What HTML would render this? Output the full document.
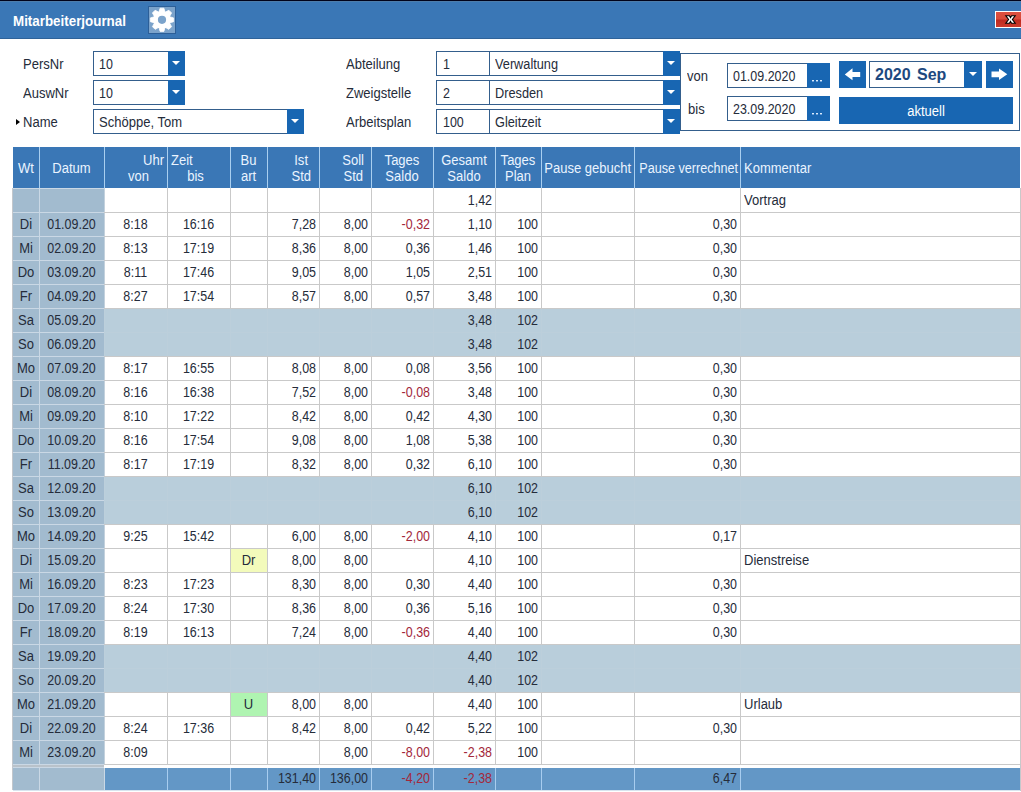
<!DOCTYPE html><html><head><meta charset="utf-8"><style>
*{margin:0;padding:0;box-sizing:border-box}
html,body{width:1021px;height:792px;overflow:hidden;background:#fff;font-family:"Liberation Sans",sans-serif;position:relative}
.a{position:absolute}
.t{position:absolute;white-space:nowrap;font-size:13px;line-height:16px;color:#252c3a}
.box{position:absolute;border:1px solid #345e8c;background:#fff}
.btn{position:absolute;background:#1866b2}
.tri{position:absolute;width:0;height:0;border-left:4px solid transparent;border-right:4px solid transparent;border-top:4px solid #fff}
</style></head><body>
<div class="a" style="left:0px;top:0px;width:1021px;height:1px;background:#01031a;"></div>
<div class="a" style="left:0px;top:1px;width:1021px;height:38px;background:#3a77b6;"></div>
<div class="a" style="left:0px;top:38px;width:1021px;height:1px;background:#2f6399;"></div>
<div class="a" style="left:0px;top:1px;width:1021px;height:1px;background:#4d7dab;"></div>
<div class="t" style="left:13px;top:12.8px;font-size:14px;font-weight:bold;color:#fff;transform:scaleX(0.955);transform-origin:0 0">Mitarbeiterjournal</div>
<div class="a" style="left:148px;top:6px;width:28px;height:28px;background:#7ba3cb;border:1px solid #2c5f98"></div>
<svg class="a" style="left:148px;top:6px" width="28" height="28" viewBox="0 0 28 28">
<g fill="#fff" transform="translate(14 13.8)">
<circle r="8.8"/><polygon points="-3.2,-7 3.2,-7 1.9,-11.6 -1.9,-11.6" stroke="#fff" stroke-width="0.8" stroke-linejoin="round" transform="rotate(0)"/><polygon points="-3.2,-7 3.2,-7 1.9,-11.6 -1.9,-11.6" stroke="#fff" stroke-width="0.8" stroke-linejoin="round" transform="rotate(45)"/><polygon points="-3.2,-7 3.2,-7 1.9,-11.6 -1.9,-11.6" stroke="#fff" stroke-width="0.8" stroke-linejoin="round" transform="rotate(90)"/><polygon points="-3.2,-7 3.2,-7 1.9,-11.6 -1.9,-11.6" stroke="#fff" stroke-width="0.8" stroke-linejoin="round" transform="rotate(135)"/><polygon points="-3.2,-7 3.2,-7 1.9,-11.6 -1.9,-11.6" stroke="#fff" stroke-width="0.8" stroke-linejoin="round" transform="rotate(180)"/><polygon points="-3.2,-7 3.2,-7 1.9,-11.6 -1.9,-11.6" stroke="#fff" stroke-width="0.8" stroke-linejoin="round" transform="rotate(225)"/><polygon points="-3.2,-7 3.2,-7 1.9,-11.6 -1.9,-11.6" stroke="#fff" stroke-width="0.8" stroke-linejoin="round" transform="rotate(270)"/><polygon points="-3.2,-7 3.2,-7 1.9,-11.6 -1.9,-11.6" stroke="#fff" stroke-width="0.8" stroke-linejoin="round" transform="rotate(315)"/>
</g><circle cx="14" cy="13.8" r="4.1" fill="#7ba3cb"/></svg>
<div class="a" style="left:995px;top:11px;width:30px;height:17px;background:linear-gradient(#dd5040 0%,#d84a3a 45%,#bf2a20 55%,#cc3a2c 100%);border:1px solid #fff"></div>
<svg class="a" style="left:1004px;top:13.5px" width="13" height="11" viewBox="0 0 13 11">
<polygon points="1.8,1.8 5.4,1.8 6.5,3.6 7.6,1.8 11.2,1.8 8.4,5.5 11.2,9.2 7.6,9.2 6.5,7.4 5.4,9.2 1.8,9.2 4.6,5.5" fill="#fff" stroke="#000" stroke-width="1.1" stroke-linejoin="miter"/>
</svg>
<div class="t" style="left:23px;top:56px;font-size:14px;transform:scaleX(0.93);transform-origin:0 0">PersNr</div>
<div class="t" style="left:23px;top:85px;font-size:14px;transform:scaleX(0.93);transform-origin:0 0">AuswNr</div>
<div class="t" style="left:23px;top:114px;font-size:14px;transform:scaleX(0.93);transform-origin:0 0">Name</div>
<div class="a" style="left:16px;top:119px;width:0;height:0;border-top:3px solid transparent;border-bottom:3px solid transparent;border-left:4px solid #000"></div>
<div class="box" style="left:93px;top:51px;width:92px;height:25px"></div>
<div class="a" style="left:168px;top:51px;width:17px;height:25px;background:#1866b2;"></div>
<div class="tri" style="left:172px;top:61px"></div>
<div class="t" style="left:99px;top:56px;font-size:14px;transform:scaleX(0.89);transform-origin:0 0">10</div>
<div class="box" style="left:93px;top:80px;width:92px;height:25px"></div>
<div class="a" style="left:168px;top:80px;width:17px;height:25px;background:#1866b2;"></div>
<div class="tri" style="left:172px;top:90px"></div>
<div class="t" style="left:99px;top:85px;font-size:14px;transform:scaleX(0.89);transform-origin:0 0">10</div>
<div class="box" style="left:93px;top:109px;width:211px;height:25px"></div>
<div class="a" style="left:287px;top:109px;width:17px;height:25px;background:#1866b2;"></div>
<div class="tri" style="left:291px;top:119px"></div>
<div class="t" style="left:99px;top:114px;font-size:14px;transform:scaleX(0.93);transform-origin:0 0">Sch&ouml;ppe, Tom</div>
<div class="t" style="left:346px;top:56px;font-size:14px;transform:scaleX(0.93);transform-origin:0 0">Abteilung</div>
<div class="t" style="left:346px;top:85px;font-size:14px;transform:scaleX(0.93);transform-origin:0 0">Zweigstelle</div>
<div class="t" style="left:346px;top:114px;font-size:14px;transform:scaleX(0.93);transform-origin:0 0">Arbeitsplan</div>
<div class="box" style="left:436px;top:51px;width:244px;height:25px"></div>
<div class="a" style="left:489px;top:51px;width:1px;height:25px;background:#345e8c;"></div>
<div class="a" style="left:663px;top:51px;width:17px;height:25px;background:#1866b2;"></div>
<div class="tri" style="left:667px;top:61px"></div>
<div class="t" style="left:443px;top:56px;font-size:14px;transform:scaleX(0.89);transform-origin:0 0">1</div>
<div class="t" style="left:495px;top:56px;font-size:14px;transform:scaleX(0.91);transform-origin:0 0">Verwaltung</div>
<div class="box" style="left:436px;top:80px;width:244px;height:25px"></div>
<div class="a" style="left:489px;top:80px;width:1px;height:25px;background:#345e8c;"></div>
<div class="a" style="left:663px;top:80px;width:17px;height:25px;background:#1866b2;"></div>
<div class="tri" style="left:667px;top:90px"></div>
<div class="t" style="left:443px;top:85px;font-size:14px;transform:scaleX(0.89);transform-origin:0 0">2</div>
<div class="t" style="left:495px;top:85px;font-size:14px;transform:scaleX(0.91);transform-origin:0 0">Dresden</div>
<div class="box" style="left:436px;top:109px;width:244px;height:25px"></div>
<div class="a" style="left:489px;top:109px;width:1px;height:25px;background:#345e8c;"></div>
<div class="a" style="left:663px;top:109px;width:17px;height:25px;background:#1866b2;"></div>
<div class="tri" style="left:667px;top:119px"></div>
<div class="t" style="left:443px;top:114px;font-size:14px;transform:scaleX(0.89);transform-origin:0 0">100</div>
<div class="t" style="left:495px;top:114px;font-size:14px;transform:scaleX(0.91);transform-origin:0 0">Gleitzeit</div>
<div class="a" style="left:680px;top:53px;width:340px;height:78px;border:1px solid #345e8c"></div>
<div class="a" style="left:663px;top:51px;width:17px;height:25px;background:#1866b2;"></div>
<div class="tri" style="left:667px;top:61px"></div>
<div class="a" style="left:663px;top:80px;width:17px;height:25px;background:#1866b2;"></div>
<div class="tri" style="left:667px;top:90px"></div>
<div class="a" style="left:663px;top:109px;width:17px;height:25px;background:#1866b2;"></div>
<div class="tri" style="left:667px;top:119px"></div>
<div class="t" style="left:687px;top:68px;font-size:14px;transform:scaleX(0.93);transform-origin:0 0">von</div>
<div class="t" style="left:688px;top:101px;font-size:14px;transform:scaleX(0.93);transform-origin:0 0">bis</div>
<div class="box" style="left:727px;top:63px;width:103px;height:25px"></div>
<div class="a" style="left:807px;top:63px;width:23px;height:25px;background:#1866b2;"></div>
<div class="a" style="left:812px;top:80px;width:2px;height:1px;background:#d9ebfc;"></div>
<div class="a" style="left:812px;top:81px;width:2px;height:1px;background:#6c9fd6;"></div>
<div class="a" style="left:816px;top:80px;width:2px;height:1px;background:#d9ebfc;"></div>
<div class="a" style="left:816px;top:81px;width:2px;height:1px;background:#6c9fd6;"></div>
<div class="a" style="left:820px;top:80px;width:2px;height:1px;background:#d9ebfc;"></div>
<div class="a" style="left:820px;top:81px;width:2px;height:1px;background:#6c9fd6;"></div>
<div class="t" style="left:733px;top:68px;font-size:14px;transform:scaleX(0.89);transform-origin:0 0">01.09.2020</div>
<div class="box" style="left:727px;top:96px;width:103px;height:25px"></div>
<div class="a" style="left:807px;top:96px;width:23px;height:25px;background:#1866b2;"></div>
<div class="a" style="left:812px;top:113px;width:2px;height:1px;background:#d9ebfc;"></div>
<div class="a" style="left:812px;top:114px;width:2px;height:1px;background:#6c9fd6;"></div>
<div class="a" style="left:816px;top:113px;width:2px;height:1px;background:#d9ebfc;"></div>
<div class="a" style="left:816px;top:114px;width:2px;height:1px;background:#6c9fd6;"></div>
<div class="a" style="left:820px;top:113px;width:2px;height:1px;background:#d9ebfc;"></div>
<div class="a" style="left:820px;top:114px;width:2px;height:1px;background:#6c9fd6;"></div>
<div class="t" style="left:733px;top:101px;font-size:14px;transform:scaleX(0.89);transform-origin:0 0">23.09.2020</div>
<div class="a" style="left:839px;top:61px;width:27px;height:27px;background:#1866b2;"></div>
<div class="a" style="left:986px;top:61px;width:27px;height:27px;background:#1866b2;"></div>
<svg class="a" style="left:843px;top:66px" width="18" height="16" viewBox="0 0 18 16">
<path d="M1.8 8.5 L9.5 2.3 L9.5 6 L17.2 6 L17.2 11.1 L9.5 11.1 L9.5 14.3 Z" fill="#fff"/></svg>
<svg class="a" style="left:990px;top:66px" width="18" height="16" viewBox="0 0 18 16">
<path d="M17.3 8.2 L9 2.4 L9 5.5 L1.5 5.5 L1.5 11.2 L9 11.2 L9 14 Z" fill="#fff"/></svg>
<div class="box" style="left:869px;top:61px;width:113px;height:27px"></div>
<div class="a" style="left:964px;top:61px;width:18px;height:27px;background:#1866b2;"></div>
<div class="tri" style="left:969px;top:72px"></div>
<div class="t" style="left:875px;top:66px;font-size:16px;line-height:18px;font-weight:bold;color:#1d4980;word-spacing:2px">2020 Sep</div>
<div class="a" style="left:839px;top:97px;width:174px;height:27px;background:#1866b2;"></div>
<div class="t" style="left:839px;top:103px;width:174px;text-align:center;font-size:14px;color:#fff;transform:scaleX(0.93);transform-origin:50% 0">aktuell</div>
<div class="a" style="left:13px;top:147px;width:1007px;height:41px;background:#3a77b6;"></div>
<div class="a" style="left:39px;top:147px;width:1px;height:41px;background:#a9cff0;"></div>
<div class="a" style="left:104px;top:147px;width:1px;height:41px;background:#a9cff0;"></div>
<div class="a" style="left:167px;top:147px;width:1px;height:41px;background:#a9cff0;"></div>
<div class="a" style="left:230px;top:147px;width:1px;height:41px;background:#a9cff0;"></div>
<div class="a" style="left:267px;top:147px;width:1px;height:41px;background:#a9cff0;"></div>
<div class="a" style="left:319px;top:147px;width:1px;height:41px;background:#a9cff0;"></div>
<div class="a" style="left:371px;top:147px;width:1px;height:41px;background:#a9cff0;"></div>
<div class="a" style="left:433px;top:147px;width:1px;height:41px;background:#a9cff0;"></div>
<div class="a" style="left:495px;top:147px;width:1px;height:41px;background:#a9cff0;"></div>
<div class="a" style="left:541px;top:147px;width:1px;height:41px;background:#a9cff0;"></div>
<div class="a" style="left:634px;top:147px;width:1px;height:41px;background:#a9cff0;"></div>
<div class="a" style="left:740px;top:147px;width:1px;height:41px;background:#a9cff0;"></div>
<div class="t" style="left:13px;top:160px;width:26px;text-align:center;font-size:14px;color:#eaf4ff;transform:scaleX(0.93);transform-origin:50% 0">Wt</div>
<div class="t" style="left:39px;top:160px;width:65px;text-align:center;font-size:14px;color:#eaf4ff;transform:scaleX(0.93);transform-origin:50% 0">Datum</div>
<div class="t" style="left:104px;top:152px;width:60px;text-align:right;font-size:14px;color:#eaf4ff;transform:scaleX(0.93);transform-origin:100% 0">Uhr</div>
<div class="t" style="left:107px;top:168px;width:63px;text-align:center;font-size:14px;color:#eaf4ff;transform:scaleX(0.93);transform-origin:50% 0">von</div>
<div class="t" style="left:171px;top:152px;width:60px;text-align:left;font-size:14px;color:#eaf4ff;transform:scaleX(0.93);transform-origin:0 0">Zeit</div>
<div class="t" style="left:164px;top:168px;width:63px;text-align:center;font-size:14px;color:#eaf4ff;transform:scaleX(0.93);transform-origin:50% 0">bis</div>
<div class="t" style="left:230px;top:152px;width:37px;text-align:center;font-size:14px;color:#eaf4ff;transform:scaleX(0.93);transform-origin:50% 0">Bu</div>
<div class="t" style="left:230px;top:168px;width:37px;text-align:center;font-size:14px;color:#eaf4ff;transform:scaleX(0.93);transform-origin:50% 0">art</div>
<div class="t" style="left:267px;top:152px;width:41px;text-align:right;font-size:14px;color:#eaf4ff;transform:scaleX(0.93);transform-origin:100% 0">Ist</div>
<div class="t" style="left:267px;top:168px;width:44px;text-align:right;font-size:14px;color:#eaf4ff;transform:scaleX(0.93);transform-origin:100% 0">Std</div>
<div class="t" style="left:319px;top:152px;width:45px;text-align:right;font-size:14px;color:#eaf4ff;transform:scaleX(0.93);transform-origin:100% 0">Soll</div>
<div class="t" style="left:319px;top:168px;width:44px;text-align:right;font-size:14px;color:#eaf4ff;transform:scaleX(0.93);transform-origin:100% 0">Std</div>
<div class="t" style="left:371px;top:152px;width:62px;text-align:center;font-size:14px;color:#eaf4ff;transform:scaleX(0.93);transform-origin:50% 0">Tages</div>
<div class="t" style="left:371px;top:168px;width:62px;text-align:center;font-size:14px;color:#eaf4ff;transform:scaleX(0.93);transform-origin:50% 0">Saldo</div>
<div class="t" style="left:433px;top:152px;width:62px;text-align:center;font-size:14px;color:#eaf4ff;transform:scaleX(0.93);transform-origin:50% 0">Gesamt</div>
<div class="t" style="left:433px;top:168px;width:62px;text-align:center;font-size:14px;color:#eaf4ff;transform:scaleX(0.93);transform-origin:50% 0">Saldo</div>
<div class="t" style="left:495px;top:152px;width:46px;text-align:center;font-size:14px;color:#eaf4ff;transform:scaleX(0.93);transform-origin:50% 0">Tages</div>
<div class="t" style="left:495px;top:168px;width:46px;text-align:center;font-size:14px;color:#eaf4ff;transform:scaleX(0.93);transform-origin:50% 0">Plan</div>
<div class="t" style="left:541px;top:160px;width:93px;text-align:center;font-size:14px;color:#eaf4ff;transform:scaleX(0.93);transform-origin:50% 0">Pause gebucht</div>
<div class="t" style="left:634px;top:160px;width:106px;text-align:center;font-size:14px;color:#eaf4ff;transform:scaleX(0.9);transform-origin:50% 0">Pause verrechnet</div>
<div class="t" style="left:744px;top:160px;width:200px;text-align:left;font-size:14px;color:#eaf4ff;transform:scaleX(0.93);transform-origin:0 0">Kommentar</div>
<div class="a" style="left:104px;top:188px;width:916px;height:24px;background:#fff;"></div>
<div class="a" style="left:13px;top:188px;width:91px;height:24px;background:#a2bbcf;"></div>
<div class="a" style="left:104px;top:212px;width:916px;height:24px;background:#fff;"></div>
<div class="a" style="left:13px;top:212px;width:91px;height:24px;background:#a2bbcf;"></div>
<div class="a" style="left:104px;top:236px;width:916px;height:24px;background:#fff;"></div>
<div class="a" style="left:13px;top:236px;width:91px;height:24px;background:#a2bbcf;"></div>
<div class="a" style="left:104px;top:260px;width:916px;height:24px;background:#fff;"></div>
<div class="a" style="left:13px;top:260px;width:91px;height:24px;background:#a2bbcf;"></div>
<div class="a" style="left:104px;top:284px;width:916px;height:24px;background:#fff;"></div>
<div class="a" style="left:13px;top:284px;width:91px;height:24px;background:#a2bbcf;"></div>
<div class="a" style="left:104px;top:308px;width:916px;height:24px;background:#b9cedb;"></div>
<div class="a" style="left:13px;top:308px;width:91px;height:24px;background:#a2bbcf;"></div>
<div class="a" style="left:104px;top:332px;width:916px;height:24px;background:#b9cedb;"></div>
<div class="a" style="left:13px;top:332px;width:91px;height:24px;background:#a2bbcf;"></div>
<div class="a" style="left:104px;top:356px;width:916px;height:24px;background:#fff;"></div>
<div class="a" style="left:13px;top:356px;width:91px;height:24px;background:#a2bbcf;"></div>
<div class="a" style="left:104px;top:380px;width:916px;height:24px;background:#fff;"></div>
<div class="a" style="left:13px;top:380px;width:91px;height:24px;background:#a2bbcf;"></div>
<div class="a" style="left:104px;top:404px;width:916px;height:24px;background:#fff;"></div>
<div class="a" style="left:13px;top:404px;width:91px;height:24px;background:#a2bbcf;"></div>
<div class="a" style="left:104px;top:428px;width:916px;height:24px;background:#fff;"></div>
<div class="a" style="left:13px;top:428px;width:91px;height:24px;background:#a2bbcf;"></div>
<div class="a" style="left:104px;top:452px;width:916px;height:24px;background:#fff;"></div>
<div class="a" style="left:13px;top:452px;width:91px;height:24px;background:#a2bbcf;"></div>
<div class="a" style="left:104px;top:476px;width:916px;height:24px;background:#b9cedb;"></div>
<div class="a" style="left:13px;top:476px;width:91px;height:24px;background:#a2bbcf;"></div>
<div class="a" style="left:104px;top:500px;width:916px;height:24px;background:#b9cedb;"></div>
<div class="a" style="left:13px;top:500px;width:91px;height:24px;background:#a2bbcf;"></div>
<div class="a" style="left:104px;top:524px;width:916px;height:24px;background:#fff;"></div>
<div class="a" style="left:13px;top:524px;width:91px;height:24px;background:#a2bbcf;"></div>
<div class="a" style="left:104px;top:548px;width:916px;height:24px;background:#fff;"></div>
<div class="a" style="left:13px;top:548px;width:91px;height:24px;background:#a2bbcf;"></div>
<div class="a" style="left:231px;top:549px;width:36px;height:23px;background:#f3fbbb;"></div>
<div class="a" style="left:104px;top:572px;width:916px;height:24px;background:#fff;"></div>
<div class="a" style="left:13px;top:572px;width:91px;height:24px;background:#a2bbcf;"></div>
<div class="a" style="left:104px;top:596px;width:916px;height:24px;background:#fff;"></div>
<div class="a" style="left:13px;top:596px;width:91px;height:24px;background:#a2bbcf;"></div>
<div class="a" style="left:104px;top:620px;width:916px;height:24px;background:#fff;"></div>
<div class="a" style="left:13px;top:620px;width:91px;height:24px;background:#a2bbcf;"></div>
<div class="a" style="left:104px;top:644px;width:916px;height:24px;background:#b9cedb;"></div>
<div class="a" style="left:13px;top:644px;width:91px;height:24px;background:#a2bbcf;"></div>
<div class="a" style="left:104px;top:668px;width:916px;height:24px;background:#b9cedb;"></div>
<div class="a" style="left:13px;top:668px;width:91px;height:24px;background:#a2bbcf;"></div>
<div class="a" style="left:104px;top:692px;width:916px;height:24px;background:#fff;"></div>
<div class="a" style="left:13px;top:692px;width:91px;height:24px;background:#a2bbcf;"></div>
<div class="a" style="left:231px;top:693px;width:36px;height:23px;background:#aff4b1;"></div>
<div class="a" style="left:104px;top:716px;width:916px;height:24px;background:#fff;"></div>
<div class="a" style="left:13px;top:716px;width:91px;height:24px;background:#a2bbcf;"></div>
<div class="a" style="left:104px;top:740px;width:916px;height:24px;background:#fff;"></div>
<div class="a" style="left:13px;top:740px;width:91px;height:24px;background:#a2bbcf;"></div>
<div class="a" style="left:12px;top:188px;width:1px;height:602px;background:#c3c7cc;"></div>
<div class="a" style="left:39px;top:188px;width:1px;height:576px;background:#cad8e5;"></div>
<div class="a" style="left:104px;top:188px;width:1px;height:576px;background:#c3d1dd;"></div>
<div class="a" style="left:167px;top:188px;width:1px;height:576px;background:#c9c9c9;"></div>
<div class="a" style="left:230px;top:188px;width:1px;height:576px;background:#c9c9c9;"></div>
<div class="a" style="left:267px;top:188px;width:1px;height:576px;background:#c9c9c9;"></div>
<div class="a" style="left:319px;top:188px;width:1px;height:576px;background:#c9c9c9;"></div>
<div class="a" style="left:371px;top:188px;width:1px;height:576px;background:#c9c9c9;"></div>
<div class="a" style="left:433px;top:188px;width:1px;height:576px;background:#c9c9c9;"></div>
<div class="a" style="left:495px;top:188px;width:1px;height:576px;background:#c9c9c9;"></div>
<div class="a" style="left:541px;top:188px;width:1px;height:576px;background:#c9c9c9;"></div>
<div class="a" style="left:634px;top:188px;width:1px;height:576px;background:#c9c9c9;"></div>
<div class="a" style="left:740px;top:188px;width:1px;height:576px;background:#c9c9c9;"></div>
<div class="a" style="left:1020px;top:188px;width:1px;height:576px;background:#c9c9c9;"></div>
<div class="a" style="left:104px;top:308px;width:1px;height:24px;background:#bccfdb;"></div>
<div class="a" style="left:167px;top:308px;width:1px;height:24px;background:#bccfdb;"></div>
<div class="a" style="left:230px;top:308px;width:1px;height:24px;background:#bccfdb;"></div>
<div class="a" style="left:267px;top:308px;width:1px;height:24px;background:#bccfdb;"></div>
<div class="a" style="left:319px;top:308px;width:1px;height:24px;background:#bccfdb;"></div>
<div class="a" style="left:371px;top:308px;width:1px;height:24px;background:#bccfdb;"></div>
<div class="a" style="left:433px;top:308px;width:1px;height:24px;background:#bccfdb;"></div>
<div class="a" style="left:495px;top:308px;width:1px;height:24px;background:#bccfdb;"></div>
<div class="a" style="left:541px;top:308px;width:1px;height:24px;background:#bccfdb;"></div>
<div class="a" style="left:634px;top:308px;width:1px;height:24px;background:#bccfdb;"></div>
<div class="a" style="left:740px;top:308px;width:1px;height:24px;background:#bccfdb;"></div>
<div class="a" style="left:104px;top:332px;width:1px;height:24px;background:#bccfdb;"></div>
<div class="a" style="left:167px;top:332px;width:1px;height:24px;background:#bccfdb;"></div>
<div class="a" style="left:230px;top:332px;width:1px;height:24px;background:#bccfdb;"></div>
<div class="a" style="left:267px;top:332px;width:1px;height:24px;background:#bccfdb;"></div>
<div class="a" style="left:319px;top:332px;width:1px;height:24px;background:#bccfdb;"></div>
<div class="a" style="left:371px;top:332px;width:1px;height:24px;background:#bccfdb;"></div>
<div class="a" style="left:433px;top:332px;width:1px;height:24px;background:#bccfdb;"></div>
<div class="a" style="left:495px;top:332px;width:1px;height:24px;background:#bccfdb;"></div>
<div class="a" style="left:541px;top:332px;width:1px;height:24px;background:#bccfdb;"></div>
<div class="a" style="left:634px;top:332px;width:1px;height:24px;background:#bccfdb;"></div>
<div class="a" style="left:740px;top:332px;width:1px;height:24px;background:#bccfdb;"></div>
<div class="a" style="left:104px;top:476px;width:1px;height:24px;background:#bccfdb;"></div>
<div class="a" style="left:167px;top:476px;width:1px;height:24px;background:#bccfdb;"></div>
<div class="a" style="left:230px;top:476px;width:1px;height:24px;background:#bccfdb;"></div>
<div class="a" style="left:267px;top:476px;width:1px;height:24px;background:#bccfdb;"></div>
<div class="a" style="left:319px;top:476px;width:1px;height:24px;background:#bccfdb;"></div>
<div class="a" style="left:371px;top:476px;width:1px;height:24px;background:#bccfdb;"></div>
<div class="a" style="left:433px;top:476px;width:1px;height:24px;background:#bccfdb;"></div>
<div class="a" style="left:495px;top:476px;width:1px;height:24px;background:#bccfdb;"></div>
<div class="a" style="left:541px;top:476px;width:1px;height:24px;background:#bccfdb;"></div>
<div class="a" style="left:634px;top:476px;width:1px;height:24px;background:#bccfdb;"></div>
<div class="a" style="left:740px;top:476px;width:1px;height:24px;background:#bccfdb;"></div>
<div class="a" style="left:104px;top:500px;width:1px;height:24px;background:#bccfdb;"></div>
<div class="a" style="left:167px;top:500px;width:1px;height:24px;background:#bccfdb;"></div>
<div class="a" style="left:230px;top:500px;width:1px;height:24px;background:#bccfdb;"></div>
<div class="a" style="left:267px;top:500px;width:1px;height:24px;background:#bccfdb;"></div>
<div class="a" style="left:319px;top:500px;width:1px;height:24px;background:#bccfdb;"></div>
<div class="a" style="left:371px;top:500px;width:1px;height:24px;background:#bccfdb;"></div>
<div class="a" style="left:433px;top:500px;width:1px;height:24px;background:#bccfdb;"></div>
<div class="a" style="left:495px;top:500px;width:1px;height:24px;background:#bccfdb;"></div>
<div class="a" style="left:541px;top:500px;width:1px;height:24px;background:#bccfdb;"></div>
<div class="a" style="left:634px;top:500px;width:1px;height:24px;background:#bccfdb;"></div>
<div class="a" style="left:740px;top:500px;width:1px;height:24px;background:#bccfdb;"></div>
<div class="a" style="left:104px;top:644px;width:1px;height:24px;background:#bccfdb;"></div>
<div class="a" style="left:167px;top:644px;width:1px;height:24px;background:#bccfdb;"></div>
<div class="a" style="left:230px;top:644px;width:1px;height:24px;background:#bccfdb;"></div>
<div class="a" style="left:267px;top:644px;width:1px;height:24px;background:#bccfdb;"></div>
<div class="a" style="left:319px;top:644px;width:1px;height:24px;background:#bccfdb;"></div>
<div class="a" style="left:371px;top:644px;width:1px;height:24px;background:#bccfdb;"></div>
<div class="a" style="left:433px;top:644px;width:1px;height:24px;background:#bccfdb;"></div>
<div class="a" style="left:495px;top:644px;width:1px;height:24px;background:#bccfdb;"></div>
<div class="a" style="left:541px;top:644px;width:1px;height:24px;background:#bccfdb;"></div>
<div class="a" style="left:634px;top:644px;width:1px;height:24px;background:#bccfdb;"></div>
<div class="a" style="left:740px;top:644px;width:1px;height:24px;background:#bccfdb;"></div>
<div class="a" style="left:104px;top:668px;width:1px;height:24px;background:#bccfdb;"></div>
<div class="a" style="left:167px;top:668px;width:1px;height:24px;background:#bccfdb;"></div>
<div class="a" style="left:230px;top:668px;width:1px;height:24px;background:#bccfdb;"></div>
<div class="a" style="left:267px;top:668px;width:1px;height:24px;background:#bccfdb;"></div>
<div class="a" style="left:319px;top:668px;width:1px;height:24px;background:#bccfdb;"></div>
<div class="a" style="left:371px;top:668px;width:1px;height:24px;background:#bccfdb;"></div>
<div class="a" style="left:433px;top:668px;width:1px;height:24px;background:#bccfdb;"></div>
<div class="a" style="left:495px;top:668px;width:1px;height:24px;background:#bccfdb;"></div>
<div class="a" style="left:541px;top:668px;width:1px;height:24px;background:#bccfdb;"></div>
<div class="a" style="left:634px;top:668px;width:1px;height:24px;background:#bccfdb;"></div>
<div class="a" style="left:740px;top:668px;width:1px;height:24px;background:#bccfdb;"></div>
<div class="a" style="left:13px;top:212px;width:91px;height:1px;background:#cad8e5;"></div>
<div class="a" style="left:104px;top:212px;width:916px;height:1px;background:#c9c9c9;"></div>
<div class="a" style="left:13px;top:236px;width:91px;height:1px;background:#cad8e5;"></div>
<div class="a" style="left:104px;top:236px;width:916px;height:1px;background:#c9c9c9;"></div>
<div class="a" style="left:13px;top:260px;width:91px;height:1px;background:#cad8e5;"></div>
<div class="a" style="left:104px;top:260px;width:916px;height:1px;background:#c9c9c9;"></div>
<div class="a" style="left:13px;top:284px;width:91px;height:1px;background:#cad8e5;"></div>
<div class="a" style="left:104px;top:284px;width:916px;height:1px;background:#c9c9c9;"></div>
<div class="a" style="left:13px;top:308px;width:91px;height:1px;background:#cad8e5;"></div>
<div class="a" style="left:104px;top:308px;width:916px;height:1px;background:#c9c9c9;"></div>
<div class="a" style="left:13px;top:332px;width:91px;height:1px;background:#cad8e5;"></div>
<div class="a" style="left:104px;top:332px;width:916px;height:1px;background:#bccfdb;"></div>
<div class="a" style="left:13px;top:356px;width:91px;height:1px;background:#cad8e5;"></div>
<div class="a" style="left:104px;top:356px;width:916px;height:1px;background:#c9c9c9;"></div>
<div class="a" style="left:13px;top:380px;width:91px;height:1px;background:#cad8e5;"></div>
<div class="a" style="left:104px;top:380px;width:916px;height:1px;background:#c9c9c9;"></div>
<div class="a" style="left:13px;top:404px;width:91px;height:1px;background:#cad8e5;"></div>
<div class="a" style="left:104px;top:404px;width:916px;height:1px;background:#c9c9c9;"></div>
<div class="a" style="left:13px;top:428px;width:91px;height:1px;background:#cad8e5;"></div>
<div class="a" style="left:104px;top:428px;width:916px;height:1px;background:#c9c9c9;"></div>
<div class="a" style="left:13px;top:452px;width:91px;height:1px;background:#cad8e5;"></div>
<div class="a" style="left:104px;top:452px;width:916px;height:1px;background:#c9c9c9;"></div>
<div class="a" style="left:13px;top:476px;width:91px;height:1px;background:#cad8e5;"></div>
<div class="a" style="left:104px;top:476px;width:916px;height:1px;background:#c9c9c9;"></div>
<div class="a" style="left:13px;top:500px;width:91px;height:1px;background:#cad8e5;"></div>
<div class="a" style="left:104px;top:500px;width:916px;height:1px;background:#bccfdb;"></div>
<div class="a" style="left:13px;top:524px;width:91px;height:1px;background:#cad8e5;"></div>
<div class="a" style="left:104px;top:524px;width:916px;height:1px;background:#c9c9c9;"></div>
<div class="a" style="left:13px;top:548px;width:91px;height:1px;background:#cad8e5;"></div>
<div class="a" style="left:104px;top:548px;width:916px;height:1px;background:#c9c9c9;"></div>
<div class="a" style="left:13px;top:572px;width:91px;height:1px;background:#cad8e5;"></div>
<div class="a" style="left:104px;top:572px;width:916px;height:1px;background:#c9c9c9;"></div>
<div class="a" style="left:13px;top:596px;width:91px;height:1px;background:#cad8e5;"></div>
<div class="a" style="left:104px;top:596px;width:916px;height:1px;background:#c9c9c9;"></div>
<div class="a" style="left:13px;top:620px;width:91px;height:1px;background:#cad8e5;"></div>
<div class="a" style="left:104px;top:620px;width:916px;height:1px;background:#c9c9c9;"></div>
<div class="a" style="left:13px;top:644px;width:91px;height:1px;background:#cad8e5;"></div>
<div class="a" style="left:104px;top:644px;width:916px;height:1px;background:#c9c9c9;"></div>
<div class="a" style="left:13px;top:668px;width:91px;height:1px;background:#cad8e5;"></div>
<div class="a" style="left:104px;top:668px;width:916px;height:1px;background:#bccfdb;"></div>
<div class="a" style="left:13px;top:692px;width:91px;height:1px;background:#cad8e5;"></div>
<div class="a" style="left:104px;top:692px;width:916px;height:1px;background:#c9c9c9;"></div>
<div class="a" style="left:13px;top:716px;width:91px;height:1px;background:#cad8e5;"></div>
<div class="a" style="left:104px;top:716px;width:916px;height:1px;background:#c9c9c9;"></div>
<div class="a" style="left:13px;top:740px;width:91px;height:1px;background:#cad8e5;"></div>
<div class="a" style="left:104px;top:740px;width:916px;height:1px;background:#c9c9c9;"></div>
<div class="a" style="left:13px;top:764px;width:91px;height:1px;background:#cad8e5;"></div>
<div class="a" style="left:104px;top:764px;width:916px;height:1px;background:#c9c9c9;"></div>
<div class="a" style="left:13px;top:188px;width:91px;height:1px;background:#cad8e5;"></div>
<div class="a" style="left:104px;top:765px;width:916px;height:3px;background:#fff;"></div>
<div class="a" style="left:13px;top:765px;width:91px;height:2px;background:#b9c2ca;"></div>
<div class="a" style="left:13px;top:767px;width:91px;height:1px;background:#cad8e5;"></div>
<div class="a" style="left:13px;top:768px;width:1007px;height:22px;background:#6397c6;"></div>
<div class="a" style="left:13px;top:768px;width:91px;height:22px;background:#a2bbcf;"></div>
<div class="a" style="left:39px;top:768px;width:1px;height:22px;background:#cad8e5;"></div>
<div class="a" style="left:104px;top:768px;width:1px;height:22px;background:#cad8e5;"></div>
<div class="a" style="left:167px;top:768px;width:1px;height:22px;background:#a8cdef;"></div>
<div class="a" style="left:230px;top:768px;width:1px;height:22px;background:#a8cdef;"></div>
<div class="a" style="left:267px;top:768px;width:1px;height:22px;background:#a8cdef;"></div>
<div class="a" style="left:319px;top:768px;width:1px;height:22px;background:#a8cdef;"></div>
<div class="a" style="left:371px;top:768px;width:1px;height:22px;background:#a8cdef;"></div>
<div class="a" style="left:433px;top:768px;width:1px;height:22px;background:#a8cdef;"></div>
<div class="a" style="left:495px;top:768px;width:1px;height:22px;background:#a8cdef;"></div>
<div class="a" style="left:541px;top:768px;width:1px;height:22px;background:#a8cdef;"></div>
<div class="a" style="left:634px;top:768px;width:1px;height:22px;background:#a8cdef;"></div>
<div class="a" style="left:740px;top:768px;width:1px;height:22px;background:#a8cdef;"></div>
<div class="a" style="left:1020px;top:764px;width:1px;height:27px;background:#c4c8cc;"></div>
<div class="a" style="left:13px;top:790px;width:1007px;height:1px;background:#d8e4ef;"></div>
<div class="t" style="left:433px;top:192px;width:59px;text-align:right;font-size:14px;color:#252c3a;transform:scaleX(0.89);transform-origin:100% 0">1,42</div>
<div class="t" style="left:744px;top:192px;width:276px;text-align:left;font-size:14px;color:#252c3a;transform:scaleX(0.93);transform-origin:0 0">Vortrag</div>
<div class="t" style="left:13px;top:216px;width:26px;text-align:center;font-size:14px;color:#252c3a;transform:scaleX(0.93);transform-origin:50% 0">Di</div>
<div class="t" style="left:39px;top:216px;width:65px;text-align:center;font-size:14px;color:#252c3a;transform:scaleX(0.89);transform-origin:50% 0">01.09.20</div>
<div class="t" style="left:104px;top:216px;width:63px;text-align:center;font-size:14px;color:#252c3a;transform:scaleX(0.89);transform-origin:50% 0">8:18</div>
<div class="t" style="left:167px;top:216px;width:63px;text-align:center;font-size:14px;color:#252c3a;transform:scaleX(0.89);transform-origin:50% 0">16:16</div>
<div class="t" style="left:267px;top:216px;width:49px;text-align:right;font-size:14px;color:#252c3a;transform:scaleX(0.89);transform-origin:100% 0">7,28</div>
<div class="t" style="left:319px;top:216px;width:49px;text-align:right;font-size:14px;color:#252c3a;transform:scaleX(0.89);transform-origin:100% 0">8,00</div>
<div class="t" style="left:371px;top:216px;width:59px;text-align:right;font-size:14px;color:#a3283a;transform:scaleX(0.89);transform-origin:100% 0">-0,32</div>
<div class="t" style="left:433px;top:216px;width:59px;text-align:right;font-size:14px;color:#252c3a;transform:scaleX(0.89);transform-origin:100% 0">1,10</div>
<div class="t" style="left:495px;top:216px;width:43px;text-align:right;font-size:14px;color:#252c3a;transform:scaleX(0.89);transform-origin:100% 0">100</div>
<div class="t" style="left:634px;top:216px;width:103px;text-align:right;font-size:14px;color:#252c3a;transform:scaleX(0.89);transform-origin:100% 0">0,30</div>
<div class="t" style="left:13px;top:240px;width:26px;text-align:center;font-size:14px;color:#252c3a;transform:scaleX(0.93);transform-origin:50% 0">Mi</div>
<div class="t" style="left:39px;top:240px;width:65px;text-align:center;font-size:14px;color:#252c3a;transform:scaleX(0.89);transform-origin:50% 0">02.09.20</div>
<div class="t" style="left:104px;top:240px;width:63px;text-align:center;font-size:14px;color:#252c3a;transform:scaleX(0.89);transform-origin:50% 0">8:13</div>
<div class="t" style="left:167px;top:240px;width:63px;text-align:center;font-size:14px;color:#252c3a;transform:scaleX(0.89);transform-origin:50% 0">17:19</div>
<div class="t" style="left:267px;top:240px;width:49px;text-align:right;font-size:14px;color:#252c3a;transform:scaleX(0.89);transform-origin:100% 0">8,36</div>
<div class="t" style="left:319px;top:240px;width:49px;text-align:right;font-size:14px;color:#252c3a;transform:scaleX(0.89);transform-origin:100% 0">8,00</div>
<div class="t" style="left:371px;top:240px;width:59px;text-align:right;font-size:14px;color:#252c3a;transform:scaleX(0.89);transform-origin:100% 0">0,36</div>
<div class="t" style="left:433px;top:240px;width:59px;text-align:right;font-size:14px;color:#252c3a;transform:scaleX(0.89);transform-origin:100% 0">1,46</div>
<div class="t" style="left:495px;top:240px;width:43px;text-align:right;font-size:14px;color:#252c3a;transform:scaleX(0.89);transform-origin:100% 0">100</div>
<div class="t" style="left:634px;top:240px;width:103px;text-align:right;font-size:14px;color:#252c3a;transform:scaleX(0.89);transform-origin:100% 0">0,30</div>
<div class="t" style="left:13px;top:264px;width:26px;text-align:center;font-size:14px;color:#252c3a;transform:scaleX(0.93);transform-origin:50% 0">Do</div>
<div class="t" style="left:39px;top:264px;width:65px;text-align:center;font-size:14px;color:#252c3a;transform:scaleX(0.89);transform-origin:50% 0">03.09.20</div>
<div class="t" style="left:104px;top:264px;width:63px;text-align:center;font-size:14px;color:#252c3a;transform:scaleX(0.89);transform-origin:50% 0">8:11</div>
<div class="t" style="left:167px;top:264px;width:63px;text-align:center;font-size:14px;color:#252c3a;transform:scaleX(0.89);transform-origin:50% 0">17:46</div>
<div class="t" style="left:267px;top:264px;width:49px;text-align:right;font-size:14px;color:#252c3a;transform:scaleX(0.89);transform-origin:100% 0">9,05</div>
<div class="t" style="left:319px;top:264px;width:49px;text-align:right;font-size:14px;color:#252c3a;transform:scaleX(0.89);transform-origin:100% 0">8,00</div>
<div class="t" style="left:371px;top:264px;width:59px;text-align:right;font-size:14px;color:#252c3a;transform:scaleX(0.89);transform-origin:100% 0">1,05</div>
<div class="t" style="left:433px;top:264px;width:59px;text-align:right;font-size:14px;color:#252c3a;transform:scaleX(0.89);transform-origin:100% 0">2,51</div>
<div class="t" style="left:495px;top:264px;width:43px;text-align:right;font-size:14px;color:#252c3a;transform:scaleX(0.89);transform-origin:100% 0">100</div>
<div class="t" style="left:634px;top:264px;width:103px;text-align:right;font-size:14px;color:#252c3a;transform:scaleX(0.89);transform-origin:100% 0">0,30</div>
<div class="t" style="left:13px;top:288px;width:26px;text-align:center;font-size:14px;color:#252c3a;transform:scaleX(0.93);transform-origin:50% 0">Fr</div>
<div class="t" style="left:39px;top:288px;width:65px;text-align:center;font-size:14px;color:#252c3a;transform:scaleX(0.89);transform-origin:50% 0">04.09.20</div>
<div class="t" style="left:104px;top:288px;width:63px;text-align:center;font-size:14px;color:#252c3a;transform:scaleX(0.89);transform-origin:50% 0">8:27</div>
<div class="t" style="left:167px;top:288px;width:63px;text-align:center;font-size:14px;color:#252c3a;transform:scaleX(0.89);transform-origin:50% 0">17:54</div>
<div class="t" style="left:267px;top:288px;width:49px;text-align:right;font-size:14px;color:#252c3a;transform:scaleX(0.89);transform-origin:100% 0">8,57</div>
<div class="t" style="left:319px;top:288px;width:49px;text-align:right;font-size:14px;color:#252c3a;transform:scaleX(0.89);transform-origin:100% 0">8,00</div>
<div class="t" style="left:371px;top:288px;width:59px;text-align:right;font-size:14px;color:#252c3a;transform:scaleX(0.89);transform-origin:100% 0">0,57</div>
<div class="t" style="left:433px;top:288px;width:59px;text-align:right;font-size:14px;color:#252c3a;transform:scaleX(0.89);transform-origin:100% 0">3,48</div>
<div class="t" style="left:495px;top:288px;width:43px;text-align:right;font-size:14px;color:#252c3a;transform:scaleX(0.89);transform-origin:100% 0">100</div>
<div class="t" style="left:634px;top:288px;width:103px;text-align:right;font-size:14px;color:#252c3a;transform:scaleX(0.89);transform-origin:100% 0">0,30</div>
<div class="t" style="left:13px;top:312px;width:26px;text-align:center;font-size:14px;color:#252c3a;transform:scaleX(0.93);transform-origin:50% 0">Sa</div>
<div class="t" style="left:39px;top:312px;width:65px;text-align:center;font-size:14px;color:#252c3a;transform:scaleX(0.89);transform-origin:50% 0">05.09.20</div>
<div class="t" style="left:433px;top:312px;width:59px;text-align:right;font-size:14px;color:#252c3a;transform:scaleX(0.89);transform-origin:100% 0">3,48</div>
<div class="t" style="left:495px;top:312px;width:43px;text-align:right;font-size:14px;color:#252c3a;transform:scaleX(0.89);transform-origin:100% 0">102</div>
<div class="t" style="left:13px;top:336px;width:26px;text-align:center;font-size:14px;color:#252c3a;transform:scaleX(0.93);transform-origin:50% 0">So</div>
<div class="t" style="left:39px;top:336px;width:65px;text-align:center;font-size:14px;color:#252c3a;transform:scaleX(0.89);transform-origin:50% 0">06.09.20</div>
<div class="t" style="left:433px;top:336px;width:59px;text-align:right;font-size:14px;color:#252c3a;transform:scaleX(0.89);transform-origin:100% 0">3,48</div>
<div class="t" style="left:495px;top:336px;width:43px;text-align:right;font-size:14px;color:#252c3a;transform:scaleX(0.89);transform-origin:100% 0">102</div>
<div class="t" style="left:13px;top:360px;width:26px;text-align:center;font-size:14px;color:#252c3a;transform:scaleX(0.93);transform-origin:50% 0">Mo</div>
<div class="t" style="left:39px;top:360px;width:65px;text-align:center;font-size:14px;color:#252c3a;transform:scaleX(0.89);transform-origin:50% 0">07.09.20</div>
<div class="t" style="left:104px;top:360px;width:63px;text-align:center;font-size:14px;color:#252c3a;transform:scaleX(0.89);transform-origin:50% 0">8:17</div>
<div class="t" style="left:167px;top:360px;width:63px;text-align:center;font-size:14px;color:#252c3a;transform:scaleX(0.89);transform-origin:50% 0">16:55</div>
<div class="t" style="left:267px;top:360px;width:49px;text-align:right;font-size:14px;color:#252c3a;transform:scaleX(0.89);transform-origin:100% 0">8,08</div>
<div class="t" style="left:319px;top:360px;width:49px;text-align:right;font-size:14px;color:#252c3a;transform:scaleX(0.89);transform-origin:100% 0">8,00</div>
<div class="t" style="left:371px;top:360px;width:59px;text-align:right;font-size:14px;color:#252c3a;transform:scaleX(0.89);transform-origin:100% 0">0,08</div>
<div class="t" style="left:433px;top:360px;width:59px;text-align:right;font-size:14px;color:#252c3a;transform:scaleX(0.89);transform-origin:100% 0">3,56</div>
<div class="t" style="left:495px;top:360px;width:43px;text-align:right;font-size:14px;color:#252c3a;transform:scaleX(0.89);transform-origin:100% 0">100</div>
<div class="t" style="left:634px;top:360px;width:103px;text-align:right;font-size:14px;color:#252c3a;transform:scaleX(0.89);transform-origin:100% 0">0,30</div>
<div class="t" style="left:13px;top:384px;width:26px;text-align:center;font-size:14px;color:#252c3a;transform:scaleX(0.93);transform-origin:50% 0">Di</div>
<div class="t" style="left:39px;top:384px;width:65px;text-align:center;font-size:14px;color:#252c3a;transform:scaleX(0.89);transform-origin:50% 0">08.09.20</div>
<div class="t" style="left:104px;top:384px;width:63px;text-align:center;font-size:14px;color:#252c3a;transform:scaleX(0.89);transform-origin:50% 0">8:16</div>
<div class="t" style="left:167px;top:384px;width:63px;text-align:center;font-size:14px;color:#252c3a;transform:scaleX(0.89);transform-origin:50% 0">16:38</div>
<div class="t" style="left:267px;top:384px;width:49px;text-align:right;font-size:14px;color:#252c3a;transform:scaleX(0.89);transform-origin:100% 0">7,52</div>
<div class="t" style="left:319px;top:384px;width:49px;text-align:right;font-size:14px;color:#252c3a;transform:scaleX(0.89);transform-origin:100% 0">8,00</div>
<div class="t" style="left:371px;top:384px;width:59px;text-align:right;font-size:14px;color:#a3283a;transform:scaleX(0.89);transform-origin:100% 0">-0,08</div>
<div class="t" style="left:433px;top:384px;width:59px;text-align:right;font-size:14px;color:#252c3a;transform:scaleX(0.89);transform-origin:100% 0">3,48</div>
<div class="t" style="left:495px;top:384px;width:43px;text-align:right;font-size:14px;color:#252c3a;transform:scaleX(0.89);transform-origin:100% 0">100</div>
<div class="t" style="left:634px;top:384px;width:103px;text-align:right;font-size:14px;color:#252c3a;transform:scaleX(0.89);transform-origin:100% 0">0,30</div>
<div class="t" style="left:13px;top:408px;width:26px;text-align:center;font-size:14px;color:#252c3a;transform:scaleX(0.93);transform-origin:50% 0">Mi</div>
<div class="t" style="left:39px;top:408px;width:65px;text-align:center;font-size:14px;color:#252c3a;transform:scaleX(0.89);transform-origin:50% 0">09.09.20</div>
<div class="t" style="left:104px;top:408px;width:63px;text-align:center;font-size:14px;color:#252c3a;transform:scaleX(0.89);transform-origin:50% 0">8:10</div>
<div class="t" style="left:167px;top:408px;width:63px;text-align:center;font-size:14px;color:#252c3a;transform:scaleX(0.89);transform-origin:50% 0">17:22</div>
<div class="t" style="left:267px;top:408px;width:49px;text-align:right;font-size:14px;color:#252c3a;transform:scaleX(0.89);transform-origin:100% 0">8,42</div>
<div class="t" style="left:319px;top:408px;width:49px;text-align:right;font-size:14px;color:#252c3a;transform:scaleX(0.89);transform-origin:100% 0">8,00</div>
<div class="t" style="left:371px;top:408px;width:59px;text-align:right;font-size:14px;color:#252c3a;transform:scaleX(0.89);transform-origin:100% 0">0,42</div>
<div class="t" style="left:433px;top:408px;width:59px;text-align:right;font-size:14px;color:#252c3a;transform:scaleX(0.89);transform-origin:100% 0">4,30</div>
<div class="t" style="left:495px;top:408px;width:43px;text-align:right;font-size:14px;color:#252c3a;transform:scaleX(0.89);transform-origin:100% 0">100</div>
<div class="t" style="left:634px;top:408px;width:103px;text-align:right;font-size:14px;color:#252c3a;transform:scaleX(0.89);transform-origin:100% 0">0,30</div>
<div class="t" style="left:13px;top:432px;width:26px;text-align:center;font-size:14px;color:#252c3a;transform:scaleX(0.93);transform-origin:50% 0">Do</div>
<div class="t" style="left:39px;top:432px;width:65px;text-align:center;font-size:14px;color:#252c3a;transform:scaleX(0.89);transform-origin:50% 0">10.09.20</div>
<div class="t" style="left:104px;top:432px;width:63px;text-align:center;font-size:14px;color:#252c3a;transform:scaleX(0.89);transform-origin:50% 0">8:16</div>
<div class="t" style="left:167px;top:432px;width:63px;text-align:center;font-size:14px;color:#252c3a;transform:scaleX(0.89);transform-origin:50% 0">17:54</div>
<div class="t" style="left:267px;top:432px;width:49px;text-align:right;font-size:14px;color:#252c3a;transform:scaleX(0.89);transform-origin:100% 0">9,08</div>
<div class="t" style="left:319px;top:432px;width:49px;text-align:right;font-size:14px;color:#252c3a;transform:scaleX(0.89);transform-origin:100% 0">8,00</div>
<div class="t" style="left:371px;top:432px;width:59px;text-align:right;font-size:14px;color:#252c3a;transform:scaleX(0.89);transform-origin:100% 0">1,08</div>
<div class="t" style="left:433px;top:432px;width:59px;text-align:right;font-size:14px;color:#252c3a;transform:scaleX(0.89);transform-origin:100% 0">5,38</div>
<div class="t" style="left:495px;top:432px;width:43px;text-align:right;font-size:14px;color:#252c3a;transform:scaleX(0.89);transform-origin:100% 0">100</div>
<div class="t" style="left:634px;top:432px;width:103px;text-align:right;font-size:14px;color:#252c3a;transform:scaleX(0.89);transform-origin:100% 0">0,30</div>
<div class="t" style="left:13px;top:456px;width:26px;text-align:center;font-size:14px;color:#252c3a;transform:scaleX(0.93);transform-origin:50% 0">Fr</div>
<div class="t" style="left:39px;top:456px;width:65px;text-align:center;font-size:14px;color:#252c3a;transform:scaleX(0.89);transform-origin:50% 0">11.09.20</div>
<div class="t" style="left:104px;top:456px;width:63px;text-align:center;font-size:14px;color:#252c3a;transform:scaleX(0.89);transform-origin:50% 0">8:17</div>
<div class="t" style="left:167px;top:456px;width:63px;text-align:center;font-size:14px;color:#252c3a;transform:scaleX(0.89);transform-origin:50% 0">17:19</div>
<div class="t" style="left:267px;top:456px;width:49px;text-align:right;font-size:14px;color:#252c3a;transform:scaleX(0.89);transform-origin:100% 0">8,32</div>
<div class="t" style="left:319px;top:456px;width:49px;text-align:right;font-size:14px;color:#252c3a;transform:scaleX(0.89);transform-origin:100% 0">8,00</div>
<div class="t" style="left:371px;top:456px;width:59px;text-align:right;font-size:14px;color:#252c3a;transform:scaleX(0.89);transform-origin:100% 0">0,32</div>
<div class="t" style="left:433px;top:456px;width:59px;text-align:right;font-size:14px;color:#252c3a;transform:scaleX(0.89);transform-origin:100% 0">6,10</div>
<div class="t" style="left:495px;top:456px;width:43px;text-align:right;font-size:14px;color:#252c3a;transform:scaleX(0.89);transform-origin:100% 0">100</div>
<div class="t" style="left:634px;top:456px;width:103px;text-align:right;font-size:14px;color:#252c3a;transform:scaleX(0.89);transform-origin:100% 0">0,30</div>
<div class="t" style="left:13px;top:480px;width:26px;text-align:center;font-size:14px;color:#252c3a;transform:scaleX(0.93);transform-origin:50% 0">Sa</div>
<div class="t" style="left:39px;top:480px;width:65px;text-align:center;font-size:14px;color:#252c3a;transform:scaleX(0.89);transform-origin:50% 0">12.09.20</div>
<div class="t" style="left:433px;top:480px;width:59px;text-align:right;font-size:14px;color:#252c3a;transform:scaleX(0.89);transform-origin:100% 0">6,10</div>
<div class="t" style="left:495px;top:480px;width:43px;text-align:right;font-size:14px;color:#252c3a;transform:scaleX(0.89);transform-origin:100% 0">102</div>
<div class="t" style="left:13px;top:504px;width:26px;text-align:center;font-size:14px;color:#252c3a;transform:scaleX(0.93);transform-origin:50% 0">So</div>
<div class="t" style="left:39px;top:504px;width:65px;text-align:center;font-size:14px;color:#252c3a;transform:scaleX(0.89);transform-origin:50% 0">13.09.20</div>
<div class="t" style="left:433px;top:504px;width:59px;text-align:right;font-size:14px;color:#252c3a;transform:scaleX(0.89);transform-origin:100% 0">6,10</div>
<div class="t" style="left:495px;top:504px;width:43px;text-align:right;font-size:14px;color:#252c3a;transform:scaleX(0.89);transform-origin:100% 0">102</div>
<div class="t" style="left:13px;top:528px;width:26px;text-align:center;font-size:14px;color:#252c3a;transform:scaleX(0.93);transform-origin:50% 0">Mo</div>
<div class="t" style="left:39px;top:528px;width:65px;text-align:center;font-size:14px;color:#252c3a;transform:scaleX(0.89);transform-origin:50% 0">14.09.20</div>
<div class="t" style="left:104px;top:528px;width:63px;text-align:center;font-size:14px;color:#252c3a;transform:scaleX(0.89);transform-origin:50% 0">9:25</div>
<div class="t" style="left:167px;top:528px;width:63px;text-align:center;font-size:14px;color:#252c3a;transform:scaleX(0.89);transform-origin:50% 0">15:42</div>
<div class="t" style="left:267px;top:528px;width:49px;text-align:right;font-size:14px;color:#252c3a;transform:scaleX(0.89);transform-origin:100% 0">6,00</div>
<div class="t" style="left:319px;top:528px;width:49px;text-align:right;font-size:14px;color:#252c3a;transform:scaleX(0.89);transform-origin:100% 0">8,00</div>
<div class="t" style="left:371px;top:528px;width:59px;text-align:right;font-size:14px;color:#a3283a;transform:scaleX(0.89);transform-origin:100% 0">-2,00</div>
<div class="t" style="left:433px;top:528px;width:59px;text-align:right;font-size:14px;color:#252c3a;transform:scaleX(0.89);transform-origin:100% 0">4,10</div>
<div class="t" style="left:495px;top:528px;width:43px;text-align:right;font-size:14px;color:#252c3a;transform:scaleX(0.89);transform-origin:100% 0">100</div>
<div class="t" style="left:634px;top:528px;width:103px;text-align:right;font-size:14px;color:#252c3a;transform:scaleX(0.89);transform-origin:100% 0">0,17</div>
<div class="t" style="left:13px;top:552px;width:26px;text-align:center;font-size:14px;color:#252c3a;transform:scaleX(0.93);transform-origin:50% 0">Di</div>
<div class="t" style="left:39px;top:552px;width:65px;text-align:center;font-size:14px;color:#252c3a;transform:scaleX(0.89);transform-origin:50% 0">15.09.20</div>
<div class="t" style="left:230px;top:552px;width:37px;text-align:center;font-size:14px;color:#252c3a;transform:scaleX(0.93);transform-origin:50% 0">Dr</div>
<div class="t" style="left:267px;top:552px;width:49px;text-align:right;font-size:14px;color:#252c3a;transform:scaleX(0.89);transform-origin:100% 0">8,00</div>
<div class="t" style="left:319px;top:552px;width:49px;text-align:right;font-size:14px;color:#252c3a;transform:scaleX(0.89);transform-origin:100% 0">8,00</div>
<div class="t" style="left:433px;top:552px;width:59px;text-align:right;font-size:14px;color:#252c3a;transform:scaleX(0.89);transform-origin:100% 0">4,10</div>
<div class="t" style="left:495px;top:552px;width:43px;text-align:right;font-size:14px;color:#252c3a;transform:scaleX(0.89);transform-origin:100% 0">100</div>
<div class="t" style="left:744px;top:552px;width:276px;text-align:left;font-size:14px;color:#252c3a;transform:scaleX(0.93);transform-origin:0 0">Dienstreise</div>
<div class="t" style="left:13px;top:576px;width:26px;text-align:center;font-size:14px;color:#252c3a;transform:scaleX(0.93);transform-origin:50% 0">Mi</div>
<div class="t" style="left:39px;top:576px;width:65px;text-align:center;font-size:14px;color:#252c3a;transform:scaleX(0.89);transform-origin:50% 0">16.09.20</div>
<div class="t" style="left:104px;top:576px;width:63px;text-align:center;font-size:14px;color:#252c3a;transform:scaleX(0.89);transform-origin:50% 0">8:23</div>
<div class="t" style="left:167px;top:576px;width:63px;text-align:center;font-size:14px;color:#252c3a;transform:scaleX(0.89);transform-origin:50% 0">17:23</div>
<div class="t" style="left:267px;top:576px;width:49px;text-align:right;font-size:14px;color:#252c3a;transform:scaleX(0.89);transform-origin:100% 0">8,30</div>
<div class="t" style="left:319px;top:576px;width:49px;text-align:right;font-size:14px;color:#252c3a;transform:scaleX(0.89);transform-origin:100% 0">8,00</div>
<div class="t" style="left:371px;top:576px;width:59px;text-align:right;font-size:14px;color:#252c3a;transform:scaleX(0.89);transform-origin:100% 0">0,30</div>
<div class="t" style="left:433px;top:576px;width:59px;text-align:right;font-size:14px;color:#252c3a;transform:scaleX(0.89);transform-origin:100% 0">4,40</div>
<div class="t" style="left:495px;top:576px;width:43px;text-align:right;font-size:14px;color:#252c3a;transform:scaleX(0.89);transform-origin:100% 0">100</div>
<div class="t" style="left:634px;top:576px;width:103px;text-align:right;font-size:14px;color:#252c3a;transform:scaleX(0.89);transform-origin:100% 0">0,30</div>
<div class="t" style="left:13px;top:600px;width:26px;text-align:center;font-size:14px;color:#252c3a;transform:scaleX(0.93);transform-origin:50% 0">Do</div>
<div class="t" style="left:39px;top:600px;width:65px;text-align:center;font-size:14px;color:#252c3a;transform:scaleX(0.89);transform-origin:50% 0">17.09.20</div>
<div class="t" style="left:104px;top:600px;width:63px;text-align:center;font-size:14px;color:#252c3a;transform:scaleX(0.89);transform-origin:50% 0">8:24</div>
<div class="t" style="left:167px;top:600px;width:63px;text-align:center;font-size:14px;color:#252c3a;transform:scaleX(0.89);transform-origin:50% 0">17:30</div>
<div class="t" style="left:267px;top:600px;width:49px;text-align:right;font-size:14px;color:#252c3a;transform:scaleX(0.89);transform-origin:100% 0">8,36</div>
<div class="t" style="left:319px;top:600px;width:49px;text-align:right;font-size:14px;color:#252c3a;transform:scaleX(0.89);transform-origin:100% 0">8,00</div>
<div class="t" style="left:371px;top:600px;width:59px;text-align:right;font-size:14px;color:#252c3a;transform:scaleX(0.89);transform-origin:100% 0">0,36</div>
<div class="t" style="left:433px;top:600px;width:59px;text-align:right;font-size:14px;color:#252c3a;transform:scaleX(0.89);transform-origin:100% 0">5,16</div>
<div class="t" style="left:495px;top:600px;width:43px;text-align:right;font-size:14px;color:#252c3a;transform:scaleX(0.89);transform-origin:100% 0">100</div>
<div class="t" style="left:634px;top:600px;width:103px;text-align:right;font-size:14px;color:#252c3a;transform:scaleX(0.89);transform-origin:100% 0">0,30</div>
<div class="t" style="left:13px;top:624px;width:26px;text-align:center;font-size:14px;color:#252c3a;transform:scaleX(0.93);transform-origin:50% 0">Fr</div>
<div class="t" style="left:39px;top:624px;width:65px;text-align:center;font-size:14px;color:#252c3a;transform:scaleX(0.89);transform-origin:50% 0">18.09.20</div>
<div class="t" style="left:104px;top:624px;width:63px;text-align:center;font-size:14px;color:#252c3a;transform:scaleX(0.89);transform-origin:50% 0">8:19</div>
<div class="t" style="left:167px;top:624px;width:63px;text-align:center;font-size:14px;color:#252c3a;transform:scaleX(0.89);transform-origin:50% 0">16:13</div>
<div class="t" style="left:267px;top:624px;width:49px;text-align:right;font-size:14px;color:#252c3a;transform:scaleX(0.89);transform-origin:100% 0">7,24</div>
<div class="t" style="left:319px;top:624px;width:49px;text-align:right;font-size:14px;color:#252c3a;transform:scaleX(0.89);transform-origin:100% 0">8,00</div>
<div class="t" style="left:371px;top:624px;width:59px;text-align:right;font-size:14px;color:#a3283a;transform:scaleX(0.89);transform-origin:100% 0">-0,36</div>
<div class="t" style="left:433px;top:624px;width:59px;text-align:right;font-size:14px;color:#252c3a;transform:scaleX(0.89);transform-origin:100% 0">4,40</div>
<div class="t" style="left:495px;top:624px;width:43px;text-align:right;font-size:14px;color:#252c3a;transform:scaleX(0.89);transform-origin:100% 0">100</div>
<div class="t" style="left:634px;top:624px;width:103px;text-align:right;font-size:14px;color:#252c3a;transform:scaleX(0.89);transform-origin:100% 0">0,30</div>
<div class="t" style="left:13px;top:648px;width:26px;text-align:center;font-size:14px;color:#252c3a;transform:scaleX(0.93);transform-origin:50% 0">Sa</div>
<div class="t" style="left:39px;top:648px;width:65px;text-align:center;font-size:14px;color:#252c3a;transform:scaleX(0.89);transform-origin:50% 0">19.09.20</div>
<div class="t" style="left:433px;top:648px;width:59px;text-align:right;font-size:14px;color:#252c3a;transform:scaleX(0.89);transform-origin:100% 0">4,40</div>
<div class="t" style="left:495px;top:648px;width:43px;text-align:right;font-size:14px;color:#252c3a;transform:scaleX(0.89);transform-origin:100% 0">102</div>
<div class="t" style="left:13px;top:672px;width:26px;text-align:center;font-size:14px;color:#252c3a;transform:scaleX(0.93);transform-origin:50% 0">So</div>
<div class="t" style="left:39px;top:672px;width:65px;text-align:center;font-size:14px;color:#252c3a;transform:scaleX(0.89);transform-origin:50% 0">20.09.20</div>
<div class="t" style="left:433px;top:672px;width:59px;text-align:right;font-size:14px;color:#252c3a;transform:scaleX(0.89);transform-origin:100% 0">4,40</div>
<div class="t" style="left:495px;top:672px;width:43px;text-align:right;font-size:14px;color:#252c3a;transform:scaleX(0.89);transform-origin:100% 0">102</div>
<div class="t" style="left:13px;top:696px;width:26px;text-align:center;font-size:14px;color:#252c3a;transform:scaleX(0.93);transform-origin:50% 0">Mo</div>
<div class="t" style="left:39px;top:696px;width:65px;text-align:center;font-size:14px;color:#252c3a;transform:scaleX(0.89);transform-origin:50% 0">21.09.20</div>
<div class="t" style="left:230px;top:696px;width:37px;text-align:center;font-size:14px;color:#252c3a;transform:scaleX(0.93);transform-origin:50% 0">U</div>
<div class="t" style="left:267px;top:696px;width:49px;text-align:right;font-size:14px;color:#252c3a;transform:scaleX(0.89);transform-origin:100% 0">8,00</div>
<div class="t" style="left:319px;top:696px;width:49px;text-align:right;font-size:14px;color:#252c3a;transform:scaleX(0.89);transform-origin:100% 0">8,00</div>
<div class="t" style="left:433px;top:696px;width:59px;text-align:right;font-size:14px;color:#252c3a;transform:scaleX(0.89);transform-origin:100% 0">4,40</div>
<div class="t" style="left:495px;top:696px;width:43px;text-align:right;font-size:14px;color:#252c3a;transform:scaleX(0.89);transform-origin:100% 0">100</div>
<div class="t" style="left:744px;top:696px;width:276px;text-align:left;font-size:14px;color:#252c3a;transform:scaleX(0.93);transform-origin:0 0">Urlaub</div>
<div class="t" style="left:13px;top:720px;width:26px;text-align:center;font-size:14px;color:#252c3a;transform:scaleX(0.93);transform-origin:50% 0">Di</div>
<div class="t" style="left:39px;top:720px;width:65px;text-align:center;font-size:14px;color:#252c3a;transform:scaleX(0.89);transform-origin:50% 0">22.09.20</div>
<div class="t" style="left:104px;top:720px;width:63px;text-align:center;font-size:14px;color:#252c3a;transform:scaleX(0.89);transform-origin:50% 0">8:24</div>
<div class="t" style="left:167px;top:720px;width:63px;text-align:center;font-size:14px;color:#252c3a;transform:scaleX(0.89);transform-origin:50% 0">17:36</div>
<div class="t" style="left:267px;top:720px;width:49px;text-align:right;font-size:14px;color:#252c3a;transform:scaleX(0.89);transform-origin:100% 0">8,42</div>
<div class="t" style="left:319px;top:720px;width:49px;text-align:right;font-size:14px;color:#252c3a;transform:scaleX(0.89);transform-origin:100% 0">8,00</div>
<div class="t" style="left:371px;top:720px;width:59px;text-align:right;font-size:14px;color:#252c3a;transform:scaleX(0.89);transform-origin:100% 0">0,42</div>
<div class="t" style="left:433px;top:720px;width:59px;text-align:right;font-size:14px;color:#252c3a;transform:scaleX(0.89);transform-origin:100% 0">5,22</div>
<div class="t" style="left:495px;top:720px;width:43px;text-align:right;font-size:14px;color:#252c3a;transform:scaleX(0.89);transform-origin:100% 0">100</div>
<div class="t" style="left:634px;top:720px;width:103px;text-align:right;font-size:14px;color:#252c3a;transform:scaleX(0.89);transform-origin:100% 0">0,30</div>
<div class="t" style="left:13px;top:744px;width:26px;text-align:center;font-size:14px;color:#252c3a;transform:scaleX(0.93);transform-origin:50% 0">Mi</div>
<div class="t" style="left:39px;top:744px;width:65px;text-align:center;font-size:14px;color:#252c3a;transform:scaleX(0.89);transform-origin:50% 0">23.09.20</div>
<div class="t" style="left:104px;top:744px;width:63px;text-align:center;font-size:14px;color:#252c3a;transform:scaleX(0.89);transform-origin:50% 0">8:09</div>
<div class="t" style="left:319px;top:744px;width:49px;text-align:right;font-size:14px;color:#252c3a;transform:scaleX(0.89);transform-origin:100% 0">8,00</div>
<div class="t" style="left:371px;top:744px;width:59px;text-align:right;font-size:14px;color:#a3283a;transform:scaleX(0.89);transform-origin:100% 0">-8,00</div>
<div class="t" style="left:433px;top:744px;width:59px;text-align:right;font-size:14px;color:#a3283a;transform:scaleX(0.89);transform-origin:100% 0">-2,38</div>
<div class="t" style="left:495px;top:744px;width:43px;text-align:right;font-size:14px;color:#252c3a;transform:scaleX(0.89);transform-origin:100% 0">100</div>
<div class="t" style="left:267px;top:770px;width:49px;text-align:right;font-size:14px;color:#252c3a;transform:scaleX(0.89);transform-origin:100% 0">131,40</div>
<div class="t" style="left:319px;top:770px;width:49px;text-align:right;font-size:14px;color:#252c3a;transform:scaleX(0.89);transform-origin:100% 0">136,00</div>
<div class="t" style="left:371px;top:770px;width:59px;text-align:right;font-size:14px;color:#a3283a;transform:scaleX(0.89);transform-origin:100% 0">-4,20</div>
<div class="t" style="left:433px;top:770px;width:59px;text-align:right;font-size:14px;color:#a3283a;transform:scaleX(0.89);transform-origin:100% 0">-2,38</div>
<div class="t" style="left:634px;top:770px;width:103px;text-align:right;font-size:14px;color:#252c3a;transform:scaleX(0.89);transform-origin:100% 0">6,47</div>
</body></html>
